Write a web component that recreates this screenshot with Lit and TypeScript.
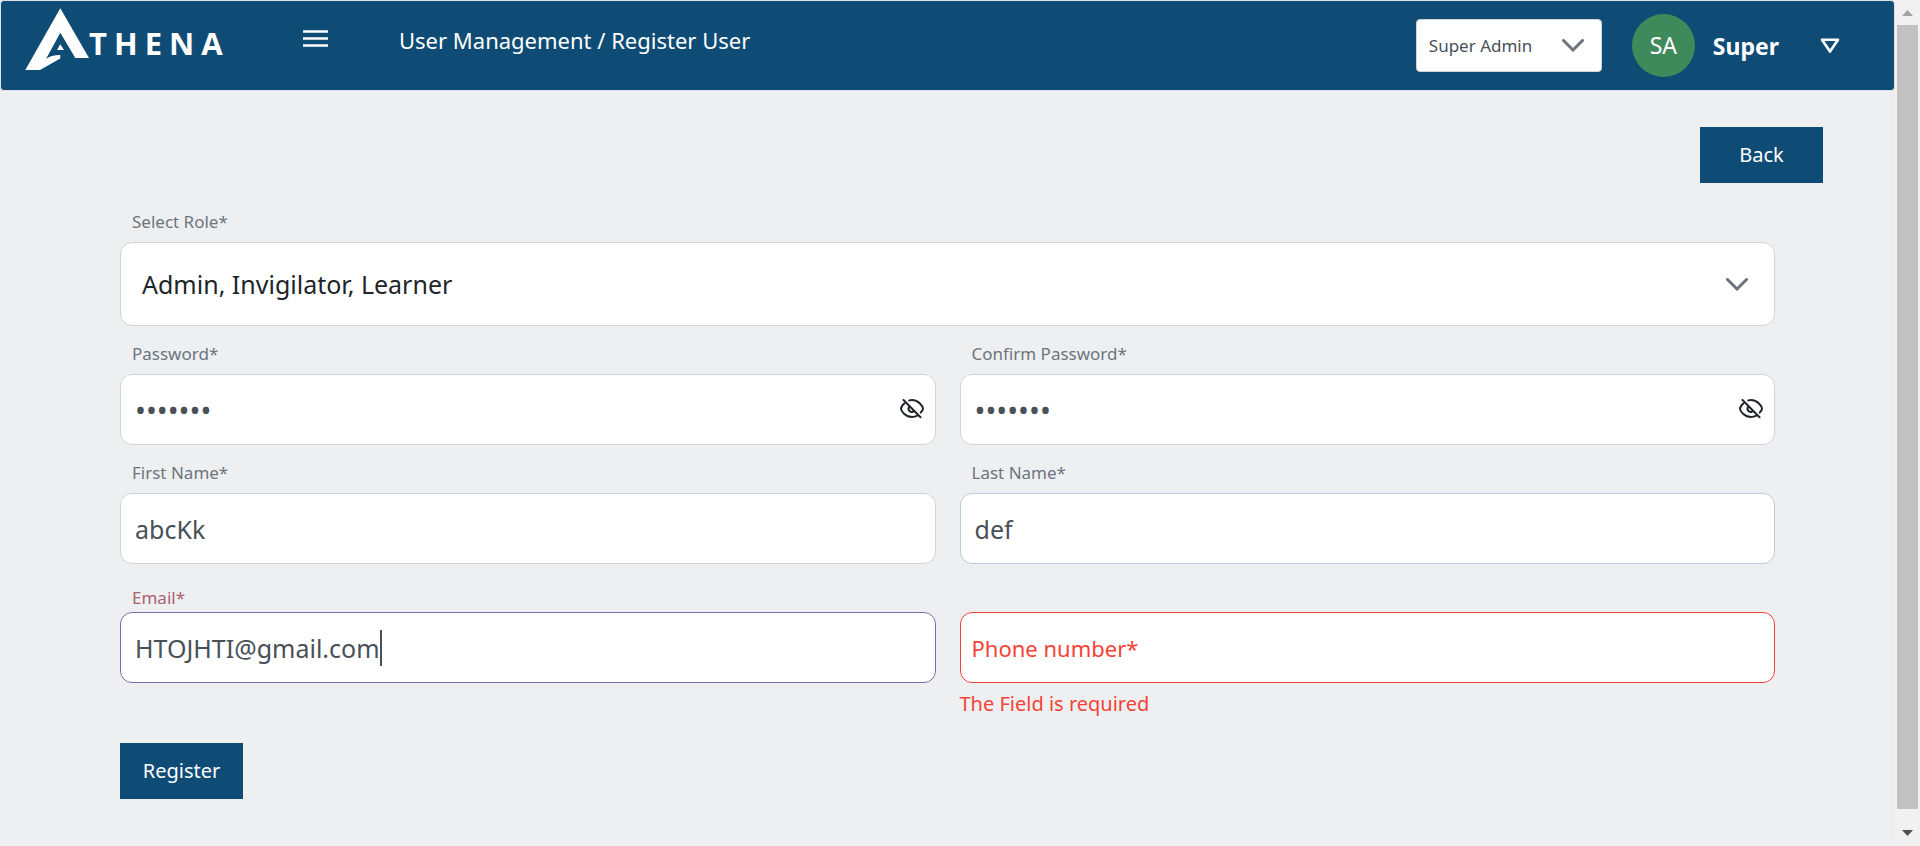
import { LitElement, html, css, svg } from "lit";
import { customElement, property } from "lit/decorators.js";
import { classMap } from "lit/directives/class-map.js";

const chevron = svg`<path d="M1.5 1.5 L11 11 L20.5 1.5" fill="none" stroke="#6c757d" stroke-width="3" stroke-linecap="round" stroke-linejoin="miter"/>`;

@customElement("athena-header")
class AthenaHeader extends LitElement {
  static styles = css`
    :host { display: block; }
    * { box-sizing: border-box; }
    .bar {
      display: flex; align-items: center; height: 91px;
      padding: 0 54px 0 24px;
      background: #0f4c75; border: 1px solid #dee2e6; border-radius: 4px;
      color: #fff;
    }
    .logo { display: flex; align-items: center; width: 278px; margin-bottom: 14px; }
    .logo svg { flex: none; }
    .word { font: 700 31px/36px "Open Sans", sans-serif; letter-spacing: 7px; margin-top: 8px; }
    button { background: none; border: 0; padding: 0; color: inherit; display: flex; cursor: pointer; }
    .title { font-size: 22px; line-height: 32px; font-weight: 400; margin: 0 0 12px 71px; }
    .menu { margin-bottom: 14px; }
    .spacer { flex: 1; }
    .picker { display: grid; width: 186px; height: 53px; }
    .picker > * { grid-area: 1 / 1; }
    .picker select {
      appearance: none; border: 1px solid #ced4da; border-radius: 4px; background: #fff;
      color: #495057; font: inherit; font-size: 17px; line-height: 24px; padding: 0 12px;
    }
    .picker svg { place-self: center end; margin-right: 18px; pointer-events: none; }
    .avatar {
      width: 63px; height: 63px; margin-left: 30px; border-radius: 50%;
      background: #3f8a5b; font-size: 23px; line-height: 63px; text-align: center;
    }
    .name { font-size: 23px; line-height: 32px; font-weight: 700; margin: 0 41px 0 18px; }
  `;
  render() {
    return html`
      <header class="bar">
        <div class="logo">
          <svg width="64" height="62" viewBox="0 0 64 62" aria-hidden="true">
            <path d="M35.3 .3 L64 50 H50.3 L35.3 24.7 L21 51 C24 48.5 29 47 35.3 47 V50.5 L15 62 H.3 Z M35.3 36.3 L39 42 H32 Z" fill="#fff"/>
          </svg>
          <span class="word">THENA</span>
        </div>
        <button class="menu" aria-label="Toggle menu">
          <svg width="25" height="18" viewBox="0 0 25 18"><path d="M0 1.5H25M0 8.5H25M0 15.5H25" stroke="#fff" stroke-width="2.6"/></svg>
        </button>
        <h1 class="title">User Management / Register User</h1>
        <div class="spacer"></div>
        <div class="picker">
          <select aria-label="Active role"><option>Super Admin</option></select>
          <svg width="22" height="13" viewBox="0 0 22 13">${chevron}</svg>
        </div>
        <div class="avatar">SA</div>
        <span class="name">Super</span>
        <button aria-label="Account menu">
          <svg width="20" height="16" viewBox="0 0 20 16"><path d="M2 1.7H18L10 13.6Z" fill="none" stroke="#fff" stroke-width="2.6" stroke-linejoin="round"/></svg>
        </button>
      </header>`;
  }
}

@customElement("form-field")
class FormField extends LitElement {
  @property() label = "";
  @property() value = "";
  @property() type = "text";
  @property() state = "";
  @property() error = "";

  static styles = css`
    :host { display: block; }
    * { box-sizing: border-box; }
    .field { display: grid; grid-template-rows: 32px 71px auto; }
    .label {
      grid-area: 1 / 1; padding-left: 12px;
      font-size: 17px; line-height: 24px; color: #6c757d;
    }
    .box {
      grid-area: 2 / 1; display: flex; align-items: center; padding: 0 11px 0 14px;
      background: #fff; border: 1px solid #ced4da; border-radius: 12px;
    }
    input {
      flex: 1; min-width: 0; height: 60px; padding: 0; border: 0; outline: 0; background: none;
      font: inherit; font-size: 25px; color: #495057;
    }
    input[type="password"] { font-size: 29px; }
    .visited .box { border-color: #b9cbdc; }
    .active .box { border-color: #7a70a6; }
    .active .label { padding-top: 6px; color: #a8626f; }
    .active input { flex: none; field-sizing: content; }
    .caret { width: 2px; height: 36px; background: #495057; }
    .invalid .box { border-color: #f44336; }
    .invalid .label { grid-area: 2 / 1; align-self: center; z-index: 1; font-size: 22px; line-height: 32px; color: #f44336; }
    .error { grid-area: 3 / 1; margin: 6px 0 0; font-size: 20px; line-height: 30px; color: #f44336; }
    button { display: flex; border: 0; padding: 0 0 2px; background: none; cursor: pointer; }
  `;
  render() {
    return html`
      <div class=${classMap({ field: true, [this.state || "idle"]: true })}>
        <label class="label" for="control">${this.label}</label>
        <div class="box">
          <input id="control" type=${this.type} .value=${this.value} />
          ${this.state === "active" ? html`<span class="caret"></span>` : ""}
          ${this.type === "password"
            ? html`<button type="button" aria-label="Show password">
                <svg width="24" height="20" viewBox="0 0 24 20" fill="none" stroke="#212529" stroke-width="2" stroke-linecap="round">
                  <path d="M4.6 4.2C2.6 5.8 1 8.4 1 9.7C1 12 5.5 18 12 18C14 18 15.8 17.5 17.2 16.7"/>
                  <path d="M9.2 1.4C10 1.2 11 1 12 1C18.5 1 23 7.4 23 9.7C23 10.8 22 12.2 20.7 13.6"/>
                  <path d="M9.2 7.9C8.3 9.2 8.4 11 9.5 12C10.6 13.1 12.3 13.2 13.4 12.4"/>
                  <path d="M3.5 1L20.5 18.2"/>
                </svg>
              </button>`
            : ""}
        </div>
        ${this.error ? html`<p class="error" role="alert">${this.error}</p>` : ""}
      </div>`;
  }
}

@customElement("app-root")
class AppRoot extends LitElement {
  static styles = css`
    :host {
      display: grid; grid-template-columns: minmax(0, 1fr) 25px; min-height: 100vh;
      background: #eeeff1; color: #212529; font-family: "Noto Sans", "Open Sans", sans-serif;
    }
    * { box-sizing: border-box; }
    .btn {
      display: block; min-width: 123px; height: 56px; padding: 0 20px; border: 0;
      background: #0f4c75; color: #fff; font: inherit; font-size: 20px; line-height: 30px; cursor: pointer;
    }
    .actions { display: flex; justify-content: flex-end; padding: 36px 72px 0; }
    .form { padding: 27px 120px 0; }
    .role { display: grid; grid-template-rows: 32px 84px; }
    .role label { grid-area: 1 / 1; padding-left: 12px; font-size: 17px; line-height: 24px; color: #6c757d; }
    .role select {
      grid-area: 2 / 1; appearance: none; width: 100%; padding: 0 21px;
      background: #fff; border: 1px solid #ced4da; border-radius: 12px;
      color: #212529; font: inherit; font-size: 25px;
    }
    .role svg { grid-area: 2 / 1; place-self: center end; margin-right: 27px; pointer-events: none; }
    .fields { display: grid; grid-template-columns: 1fr 1fr; gap: 16px 24px; margin: 16px 0 24px; }
    .scroll {
      display: flex; flex-direction: column; align-items: center; height: 100vh;
      padding: 10px 0; background: #f1f1f1;
    }
    .thumb { flex: 1; width: 21px; margin: 9px 0 21px; background: #c1c1c1; }
  `;
  render() {
    return html`
      <div>
        <athena-header></athena-header>
        <main>
          <div class="actions"><button class="btn">Back</button></div>
          <form class="form">
            <div class="role">
              <label for="role">Select Role*</label>
              <select id="role"><option>Admin, Invigilator, Learner</option></select>
              <svg width="22" height="13" viewBox="0 0 22 13">${chevron}</svg>
            </div>
            <div class="fields">
              <form-field label="Password*" type="password" value="abc1234"></form-field>
              <form-field label="Confirm Password*" type="password" value="abc1234"></form-field>
              <form-field label="First Name*" value="abcKk"></form-field>
              <form-field label="Last Name*" value="def" state="visited"></form-field>
              <form-field label="Email*" value="HTOJHTI@gmail.com" state="active"></form-field>
              <form-field label="Phone number*" state="invalid" error="The Field is required"></form-field>
            </div>
            <button class="btn" type="button">Register</button>
          </form>
        </main>
      </div>
      <div class="scroll" aria-hidden="true">
        <svg width="11" height="6" viewBox="0 0 11 6"><path d="M0 6L5.5 0L11 6Z" fill="#a3a3a3"/></svg>
        <div class="thumb"></div>
        <svg width="11" height="6" viewBox="0 0 11 6"><path d="M0 0H11L5.5 6Z" fill="#505050"/></svg>
      </div>`;
  }
}
